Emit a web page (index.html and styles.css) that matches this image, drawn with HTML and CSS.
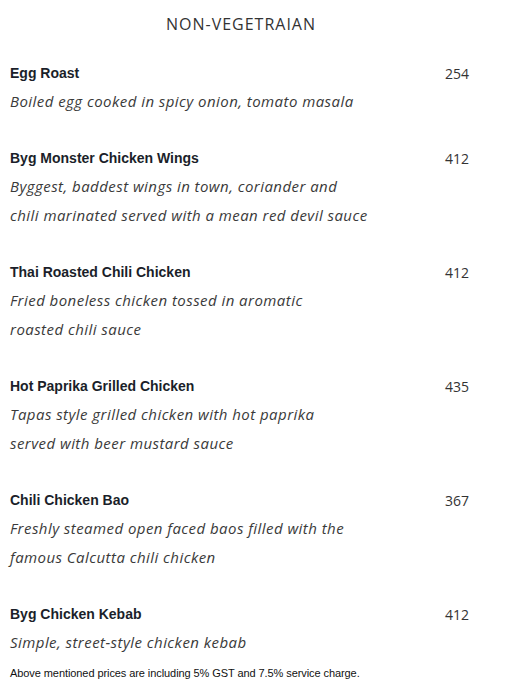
FILE: index.html
```html
<!DOCTYPE html>
<html>
<head>
<meta charset="utf-8">
<link rel="stylesheet" href="styles.css">
</head>
<body>
<div class="menu">
  <h1 class="heading">NON-VEGETRAIAN</h1>
  <div class="items">
    <div class="item">
      <div class="row"><span class="name">Egg Roast</span><span class="price">254</span></div>
      <p class="desc">Boiled egg cooked in spicy onion, tomato masala</p>
    </div>
    <div class="item">
      <div class="row"><span class="name">Byg Monster Chicken Wings</span><span class="price">412</span></div>
      <p class="desc">Byggest, baddest wings in town, coriander and<br>chili marinated served with a mean red devil sauce</p>
    </div>
    <div class="item">
      <div class="row"><span class="name">Thai Roasted Chili Chicken</span><span class="price">412</span></div>
      <p class="desc">Fried boneless chicken tossed in aromatic<br>roasted chili sauce</p>
    </div>
    <div class="item">
      <div class="row"><span class="name">Hot Paprika Grilled Chicken</span><span class="price">435</span></div>
      <p class="desc">Tapas style grilled chicken with hot paprika<br>served with beer mustard sauce</p>
    </div>
    <div class="item">
      <div class="row"><span class="name">Chili Chicken Bao</span><span class="price">367</span></div>
      <p class="desc">Freshly steamed open faced baos filled with the<br>famous Calcutta chili chicken</p>
    </div>
    <div class="item">
      <div class="row"><span class="name">Byg Chicken Kebab</span><span class="price">412</span></div>
      <p class="desc">Simple, street-style chicken kebab</p>
    </div>
  </div>
  <p class="note">Above mentioned prices are including 5% GST and 7.5% service charge.</p>
</div>
</body>
</html>
```
FILE: styles.css
```css
html, body {
  margin: 0;
  padding: 0;
  background: #ffffff;
}
.menu {
  width: 459px;
  padding: 10px 0 0 10px;
}
.heading {
  margin: 0 0 21px 0;
  width: 462px;
  text-align: center;
  font-family: "Open Sans", sans-serif;
  font-weight: 400;
  font-size: 16px;
  line-height: 28px;
  color: #333333;
  letter-spacing: 1px;
}
.items {
  display: flex;
  flex-direction: column;
  gap: 28px;
}
.row {
  display: flex;
  justify-content: space-between;
  align-items: center;
  height: 28px;
}
.name {
  font-family: "Liberation Sans", Arial, sans-serif;
  font-weight: 700;
  font-size: 14px;
  color: #1b1f2a;
}
.price {
  font-family: "Open Sans", sans-serif;
  font-size: 14px;
  color: #333333;
}
.desc {
  margin: 0;
  font-family: "Open Sans", sans-serif;
  font-style: italic;
  font-size: 15px;
  line-height: 29px;
  letter-spacing: 0.45px;
  color: #3a3a3a;
}
.note {
  margin: 9px 0 0 0;
  font-family: "Liberation Sans", Arial, sans-serif;
  font-size: 11px;
  line-height: 14px;
  letter-spacing: -0.08px;
  color: #111111;
}
```
